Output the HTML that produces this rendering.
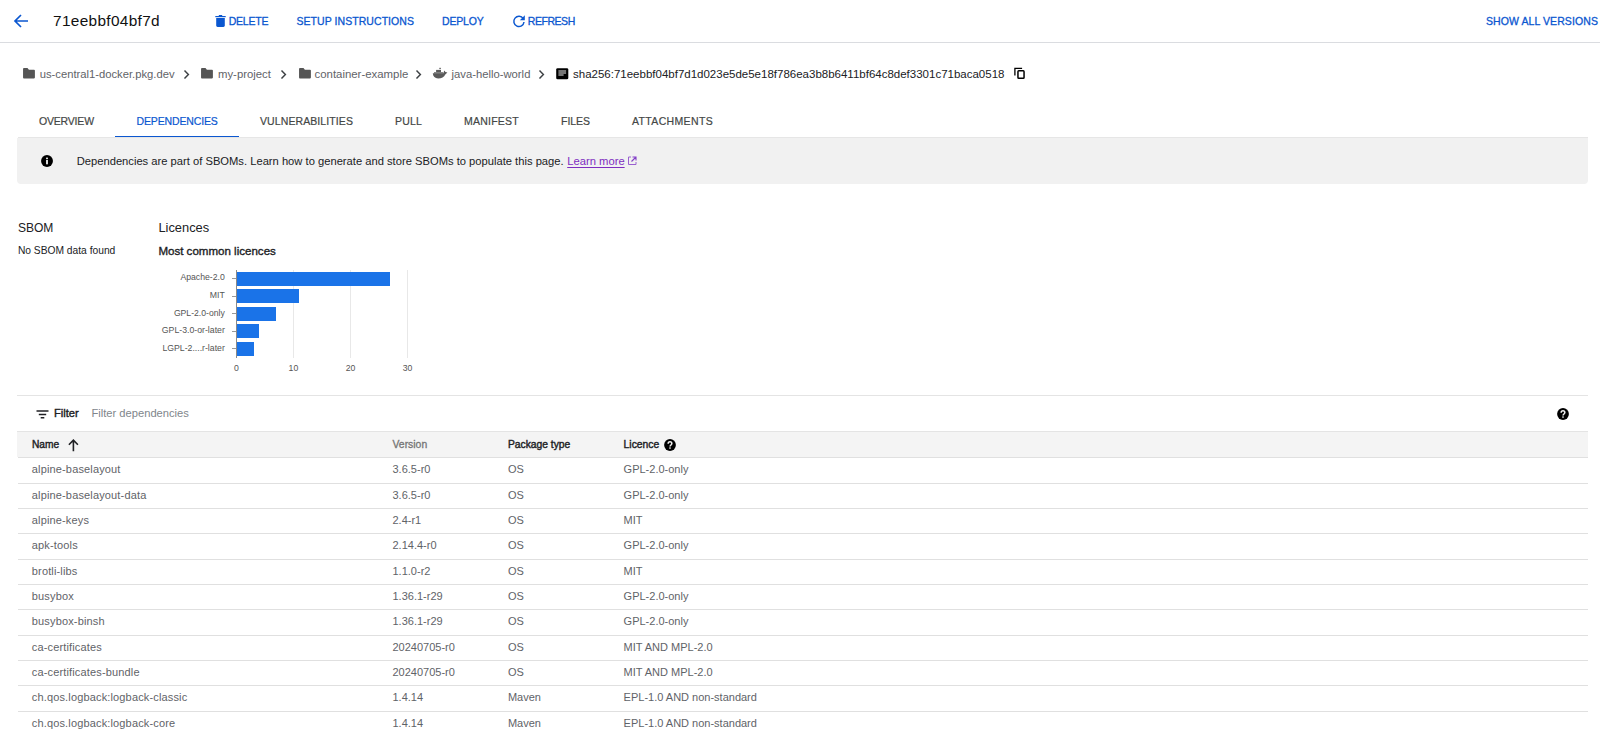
<!DOCTYPE html>
<html><head><meta charset="utf-8"><style>
html,body{margin:0;padding:0;background:#fff;width:1600px;height:736px;overflow:hidden;position:relative;font-family:"Liberation Sans", sans-serif;}
.t{position:absolute;white-space:nowrap;}
.r{position:absolute;}
</style></head><body>
<svg class="r" style="left:13px;top:13px" width="16" height="16" viewBox="0 0 16 16"><path d="M15 8H2.5M8 2L2 8l6 6" fill="none" stroke="#0b57d0" stroke-width="1.7"/></svg>
<div class="t" style="left:53.00px;top:12.76px;font-size:15.4px;line-height:15.4px;color:#111;font-weight:400;letter-spacing:0.325px;">71eebbf04bf7d</div>
<svg class="r" style="left:215px;top:15px" width="11" height="12" viewBox="0 0 11 12"><path d="M0.3 1.6h10.4" stroke="#0b57d0" stroke-width="1.2"/><path d="M3.8 0.7h3.4" stroke="#0b57d0" stroke-width="1.4"/><path d="M1.2 3h8.6v7.6c0 .8-.6 1.4-1.4 1.4H2.6c-.8 0-1.4-.6-1.4-1.4z" fill="#0b57d0"/></svg>
<div class="t" style="left:228.70px;top:16.21px;font-size:10.5px;line-height:10.5px;color:#0b57d0;font-weight:400;letter-spacing:-0.224px;-webkit-text-stroke:0.3px #0b57d0;">DELETE</div>
<div class="t" style="left:296.50px;top:16.21px;font-size:10.5px;line-height:10.5px;color:#0b57d0;font-weight:400;letter-spacing:0.056px;-webkit-text-stroke:0.3px #0b57d0;">SETUP INSTRUCTIONS</div>
<div class="t" style="left:442.00px;top:15.71px;font-size:10.5px;line-height:10.5px;color:#0b57d0;font-weight:400;letter-spacing:-0.183px;-webkit-text-stroke:0.3px #0b57d0;">DEPLOY</div>
<svg class="r" style="left:512px;top:14px" width="14" height="14" viewBox="0 0 14 14"><path d="M11.2 4.6A5.1 5.1 0 1 0 12 8" fill="none" stroke="#0b57d0" stroke-width="1.5"/><path d="M12.8 1.2v5H7.8z" fill="#0b57d0"/></svg>
<div class="t" style="left:527.80px;top:15.71px;font-size:10.5px;line-height:10.5px;color:#0b57d0;font-weight:400;letter-spacing:-0.453px;-webkit-text-stroke:0.3px #0b57d0;">REFRESH</div>
<div class="t" style="right:2.00px;top:15.71px;font-size:10.5px;line-height:10.5px;color:#0b57d0;font-weight:400;letter-spacing:0.09px;-webkit-text-stroke:0.3px #0b57d0;">SHOW ALL VERSIONS</div>
<div class="r" style="left:0px;top:42px;width:1600px;height:1px;background:#dadce0;"></div>
<svg class="r" style="left:23px;top:68.2px" width="12" height="10.5" viewBox="0 0 12 10.5"><path d="M0.9 0.1H4.5L5.9 1.7H11C11.5 1.7 11.9 2.1 11.9 2.6V9.5C11.9 10 11.5 10.4 11 10.4H0.9C0.4 10.4 0.05 10 0.05 9.5V1C0.05 0.5 0.4 0.1 0.9 0.1Z" fill="#555"/></svg>
<div class="t" style="left:39.70px;top:68.88px;font-size:11.244px;line-height:11.244px;color:#5f6368;font-weight:400;">us-central1-docker.pkg.dev</div>
<svg class="r" style="left:182.5px;top:69.8px" width="8" height="9" viewBox="0 0 8 9"><path d="M1.5 0.6l3.9 3.95-3.9 3.95" fill="none" stroke="#3c4043" stroke-width="1.45"/></svg>
<svg class="r" style="left:201px;top:68.2px" width="12" height="10.5" viewBox="0 0 12 10.5"><path d="M0.9 0.1H4.5L5.9 1.7H11C11.5 1.7 11.9 2.1 11.9 2.6V9.5C11.9 10 11.5 10.4 11 10.4H0.9C0.4 10.4 0.05 10 0.05 9.5V1C0.05 0.5 0.4 0.1 0.9 0.1Z" fill="#555"/></svg>
<div class="t" style="left:218.00px;top:68.79px;font-size:11.355px;line-height:11.355px;color:#5f6368;font-weight:400;">my-project</div>
<svg class="r" style="left:279.5px;top:69.8px" width="8" height="9" viewBox="0 0 8 9"><path d="M1.5 0.6l3.9 3.95-3.9 3.95" fill="none" stroke="#3c4043" stroke-width="1.45"/></svg>
<svg class="r" style="left:298.5px;top:68.2px" width="12" height="10.5" viewBox="0 0 12 10.5"><path d="M0.9 0.1H4.5L5.9 1.7H11C11.5 1.7 11.9 2.1 11.9 2.6V9.5C11.9 10 11.5 10.4 11 10.4H0.9C0.4 10.4 0.05 10 0.05 9.5V1C0.05 0.5 0.4 0.1 0.9 0.1Z" fill="#555"/></svg>
<div class="t" style="left:314.50px;top:68.73px;font-size:11.426px;line-height:11.426px;color:#5f6368;font-weight:400;">container-example</div>
<svg class="r" style="left:414.5px;top:69.8px" width="8" height="9" viewBox="0 0 8 9"><path d="M1.5 0.6l3.9 3.95-3.9 3.95" fill="none" stroke="#3c4043" stroke-width="1.45"/></svg>
<svg class="r" style="left:432px;top:67px" width="16" height="12" viewBox="0 0 16 12"><g fill="#5a5a5a"><rect x="7.2" y="0.8" width="1.8" height="1.3" fill="#777"/><rect x="4.1" y="2.9" width="4.9" height="2.3"/><rect x="2" y="5.2" width="9.2" height="1.3" fill="#6a6a6a"/><path d="M0.8 6.3H11.4L12.2 3.6L13.5 5L15.4 5.6L13.3 7.5C12.1 10 9.6 11.4 6.1 11.4C3 11.4 1 9.7 0.8 6.3Z"/></g></svg>
<div class="t" style="left:451.50px;top:68.85px;font-size:11.281px;line-height:11.281px;color:#5f6368;font-weight:400;">java-hello-world</div>
<svg class="r" style="left:537.5px;top:69.8px" width="8" height="9" viewBox="0 0 8 9"><path d="M1.5 0.6l3.9 3.95-3.9 3.95" fill="none" stroke="#3c4043" stroke-width="1.45"/></svg>
<svg class="r" style="left:556px;top:68px" width="12.5" height="11.5" viewBox="0 0 12.5 11.5"><rect x="0.2" y="0.2" width="12.1" height="11.1" rx="1.4" fill="#000"/><path d="M2.4 3h7.7M2.4 5h7.7M2.4 7h5.2" stroke="#e8e8e8" stroke-width="1.15"/></svg>
<div class="t" style="left:573.00px;top:68.65px;font-size:11.514px;line-height:11.514px;color:#202124;font-weight:400;">sha256:71eebbf04bf7d1d023e5de5e18f786ea3b8b6411bf64c8def3301c71baca0518</div>
<svg class="r" style="left:1013px;top:67px" width="14" height="14" viewBox="0 0 14 14"><path d="M1.9 8.6V1.4h7.2" fill="none" stroke="#000" stroke-width="1.3"/><rect x="4.95" y="3.85" width="6.1" height="7.4" rx="0.8" fill="none" stroke="#000" stroke-width="1.5"/></svg>
<div class="t" style="left:38.90px;top:115.91px;font-size:10.5px;line-height:10.5px;color:#444746;font-weight:400;letter-spacing:-0.175px;-webkit-text-stroke:0.2px #444746;">OVERVIEW</div>
<div class="t" style="left:136.60px;top:115.91px;font-size:10.5px;line-height:10.5px;color:#0b57d0;font-weight:400;letter-spacing:-0.154px;-webkit-text-stroke:0.2px #0b57d0;">DEPENDENCIES</div>
<div class="t" style="left:260.00px;top:115.91px;font-size:10.5px;line-height:10.5px;color:#444746;font-weight:400;letter-spacing:0.092px;-webkit-text-stroke:0.2px #444746;">VULNERABILITIES</div>
<div class="t" style="left:395.00px;top:115.91px;font-size:10.5px;line-height:10.5px;color:#444746;font-weight:400;letter-spacing:0.183px;-webkit-text-stroke:0.2px #444746;">PULL</div>
<div class="t" style="left:464.00px;top:115.91px;font-size:10.5px;line-height:10.5px;color:#444746;font-weight:400;letter-spacing:0.239px;-webkit-text-stroke:0.2px #444746;">MANIFEST</div>
<div class="t" style="left:561.00px;top:115.91px;font-size:10.5px;line-height:10.5px;color:#444746;font-weight:400;letter-spacing:-0.036px;-webkit-text-stroke:0.2px #444746;">FILES</div>
<div class="t" style="left:632.00px;top:115.91px;font-size:10.5px;line-height:10.5px;color:#444746;font-weight:400;letter-spacing:0.346px;-webkit-text-stroke:0.2px #444746;">ATTACHMENTS</div>
<div class="r" style="left:115px;top:135.5px;width:124px;height:2px;background:#0b57d0;"></div>
<div class="r" style="left:17.5px;top:137px;width:1570px;height:1px;background:#e6e6e6;"></div>
<div class="r" style="left:17px;top:138px;width:1570.5px;height:46px;background:#f1f1f1;border-radius:0 0 4px 4px;"></div>
<svg class="r" style="left:41.2px;top:154.9px" width="12" height="12" viewBox="0 0 12 12"><circle cx="6" cy="6" r="5.95" fill="#000"/><rect x="5.15" y="5" width="1.7" height="4.3" fill="#fff"/><rect x="5.15" y="2.6" width="1.7" height="1.6" fill="#fff"/></svg>
<div class="t" style="left:76.70px;top:155.82px;font-size:11.2px;line-height:11.2px;color:#202124;font-weight:400;">Dependencies are part of SBOMs. Learn how to generate and store SBOMs to populate this page.</div>
<div class="t" style="left:567.20px;top:155.78px;font-size:11.244px;line-height:11.244px;color:#7e2dc0;font-weight:400;text-decoration:underline;text-underline-offset:2px;">Learn more</div>
<svg class="r" style="left:627px;top:156px" width="10" height="10" viewBox="0 0 10 10"><path d="M4 1H1.5v7.5H9V6" fill="none" stroke="#9a60d0" stroke-width="1"/><path d="M5.5 1H9v3.5M9 1L4.5 5.5" fill="none" stroke="#8440c8" stroke-width="1.1"/></svg>
<div class="t" style="left:17.90px;top:222.20px;font-size:12.055px;line-height:12.055px;color:#202124;font-weight:400;">SBOM</div>
<div class="t" style="left:17.90px;top:245.51px;font-size:10.268px;line-height:10.268px;color:#202124;font-weight:400;">No SBOM data found</div>
<div class="t" style="left:158.40px;top:221.50px;font-size:12.871px;line-height:12.871px;color:#202124;font-weight:400;">Licences</div>
<div class="t" style="left:158.40px;top:245.91px;font-size:11.563px;line-height:11.563px;color:#202124;font-weight:400;-webkit-text-stroke:0.35px #202124;">Most common licences</div>
<div class="r" style="left:292.95px;top:270px;width:1px;height:88px;background:#e8e8e8;"></div>
<div class="r" style="left:350.0px;top:270px;width:1px;height:88px;background:#e8e8e8;"></div>
<div class="r" style="left:407.05px;top:270px;width:1px;height:88px;background:#e8e8e8;"></div>
<div class="r" style="left:236.4px;top:271.6px;width:154.03px;height:14px;background:#1a73e8;"></div>
<div class="r" style="left:232.3px;top:278.2px;width:4px;height:1px;background:#999;"></div>
<div class="t" style="right:1375.20px;top:273.44px;font-size:8.7px;line-height:8.7px;color:#555;font-weight:400;">Apache-2.0</div>
<div class="r" style="left:236.4px;top:289.15px;width:62.76px;height:14px;background:#1a73e8;"></div>
<div class="r" style="left:232.3px;top:295.75px;width:4px;height:1px;background:#999;"></div>
<div class="t" style="right:1375.20px;top:290.98px;font-size:8.712px;line-height:8.712px;color:#555;font-weight:400;">MIT</div>
<div class="r" style="left:236.4px;top:306.7px;width:39.94px;height:14px;background:#1a73e8;"></div>
<div class="r" style="left:232.3px;top:313.3px;width:4px;height:1px;background:#999;"></div>
<div class="t" style="right:1375.20px;top:308.57px;font-size:8.656px;line-height:8.656px;color:#555;font-weight:400;">GPL-2.0-only</div>
<div class="r" style="left:236.4px;top:324.25px;width:22.82px;height:14px;background:#1a73e8;"></div>
<div class="r" style="left:232.3px;top:330.85px;width:4px;height:1px;background:#999;"></div>
<div class="t" style="right:1375.20px;top:326.07px;font-size:8.72px;line-height:8.72px;color:#555;font-weight:400;">GPL-3.0-or-later</div>
<div class="r" style="left:236.4px;top:341.8px;width:17.12px;height:14px;background:#1a73e8;"></div>
<div class="r" style="left:232.3px;top:348.4px;width:4px;height:1px;background:#999;"></div>
<div class="t" style="right:1375.20px;top:343.62px;font-size:8.718px;line-height:8.718px;color:#555;font-weight:400;">LGPL-2....r-later</div>
<div class="r" style="left:236.1px;top:270px;width:1px;height:88px;background:#8a8a8a;"></div>
<div class="t" style="left:186.40px;width:100px;text-align:center;top:363.94px;font-size:8.7px;line-height:8.7px;color:#555;font-weight:400;">0</div>
<div class="t" style="left:243.45px;width:100px;text-align:center;top:363.94px;font-size:8.7px;line-height:8.7px;color:#555;font-weight:400;">10</div>
<div class="t" style="left:300.50px;width:100px;text-align:center;top:363.94px;font-size:8.7px;line-height:8.7px;color:#555;font-weight:400;">20</div>
<div class="t" style="left:357.55px;width:100px;text-align:center;top:363.94px;font-size:8.7px;line-height:8.7px;color:#555;font-weight:400;">30</div>
<div class="r" style="left:17px;top:395.2px;width:1570.5px;height:1px;background:#e4e4e4;"></div>
<svg class="r" style="left:35.5px;top:409.5px" width="13" height="9" viewBox="0 0 13 9"><path d="M0.5 1h12M2.8 4.4h7.4M4.7 7.7h3.6" stroke="#202124" stroke-width="1.5"/></svg>
<div class="t" style="left:54.00px;top:407.85px;font-size:11.16px;line-height:11.16px;color:#202124;font-weight:400;-webkit-text-stroke:0.4px #202124;">Filter</div>
<div class="t" style="left:91.40px;top:407.83px;font-size:11.183px;line-height:11.183px;color:#80868b;font-weight:400;">Filter dependencies</div>
<svg class="r" style="left:1557.3px;top:407.8px" width="12" height="12" viewBox="0 0 12 12"><circle cx="6" cy="6" r="5.9" fill="#000"/><path d="M4.15 4.7c0-1.15.85-1.85 1.85-1.85s1.85.7 1.85 1.75c0 1.35-1.8 1.45-1.8 2.85" fill="none" stroke="#f0f0f0" stroke-width="1.5"/><rect x="5.25" y="8.35" width="1.5" height="1.4" fill="#f0f0f0"/></svg>
<div class="r" style="left:17px;top:431.2px;width:1570.5px;height:26.2px;background:#f4f4f4;border-top:1px solid #e4e4e4;box-sizing:border-box;"></div>
<div class="t" style="left:32.00px;top:439.77px;font-size:10.197px;line-height:10.197px;color:#202124;font-weight:400;-webkit-text-stroke:0.4px #202124;">Name</div>
<svg class="r" style="left:68px;top:438.5px" width="11" height="13" viewBox="0 0 11 13"><path d="M5.4 12.2V1.4M0.9 5.7l4.5-4.5 4.5 4.5" fill="none" stroke="#202124" stroke-width="1.6"/></svg>
<div class="t" style="left:392.50px;top:439.59px;font-size:10.403px;line-height:10.403px;color:#757575;font-weight:400;-webkit-text-stroke:0.3px #757575;">Version</div>
<div class="t" style="left:507.90px;top:439.67px;font-size:10.314px;line-height:10.314px;color:#202124;font-weight:400;-webkit-text-stroke:0.4px #202124;">Package type</div>
<div class="t" style="left:623.60px;top:439.63px;font-size:10.357px;line-height:10.357px;color:#202124;font-weight:400;-webkit-text-stroke:0.4px #202124;">Licence</div>
<svg class="r" style="left:663.8px;top:438.8px" width="12" height="12" viewBox="0 0 12 12"><circle cx="6" cy="6" r="5.9" fill="#000"/><path d="M4.15 4.7c0-1.15.85-1.85 1.85-1.85s1.85.7 1.85 1.75c0 1.35-1.8 1.45-1.8 2.85" fill="none" stroke="#f0f0f0" stroke-width="1.5"/><rect x="5.25" y="8.35" width="1.5" height="1.4" fill="#f0f0f0"/></svg>
<div class="r" style="left:17.5px;top:457.2px;width:1570px;height:1px;background:#e0e0e0;"></div>
<div class="t" style="left:31.80px;top:464.49px;font-size:11.0px;line-height:11.0px;color:#5f6368;font-weight:400;letter-spacing:0.15px;">alpine-baselayout</div>
<div class="t" style="left:392.50px;top:464.49px;font-size:11.0px;line-height:11.0px;color:#5f6368;font-weight:400;">3.6.5-r0</div>
<div class="t" style="left:507.90px;top:464.49px;font-size:11.0px;line-height:11.0px;color:#5f6368;font-weight:400;">OS</div>
<div class="t" style="left:623.60px;top:464.49px;font-size:11.0px;line-height:11.0px;color:#5f6368;font-weight:400;">GPL-2.0-only</div>
<div class="r" style="left:17.5px;top:482.53px;width:1570px;height:1px;background:#e0e0e0;"></div>
<div class="t" style="left:31.80px;top:489.82px;font-size:11.0px;line-height:11.0px;color:#5f6368;font-weight:400;letter-spacing:0.15px;">alpine-baselayout-data</div>
<div class="t" style="left:392.50px;top:489.82px;font-size:11.0px;line-height:11.0px;color:#5f6368;font-weight:400;">3.6.5-r0</div>
<div class="t" style="left:507.90px;top:489.82px;font-size:11.0px;line-height:11.0px;color:#5f6368;font-weight:400;">OS</div>
<div class="t" style="left:623.60px;top:489.82px;font-size:11.0px;line-height:11.0px;color:#5f6368;font-weight:400;">GPL-2.0-only</div>
<div class="r" style="left:17.5px;top:507.86px;width:1570px;height:1px;background:#e0e0e0;"></div>
<div class="t" style="left:31.80px;top:515.15px;font-size:11.0px;line-height:11.0px;color:#5f6368;font-weight:400;letter-spacing:0.15px;">alpine-keys</div>
<div class="t" style="left:392.50px;top:515.15px;font-size:11.0px;line-height:11.0px;color:#5f6368;font-weight:400;">2.4-r1</div>
<div class="t" style="left:507.90px;top:515.15px;font-size:11.0px;line-height:11.0px;color:#5f6368;font-weight:400;">OS</div>
<div class="t" style="left:623.60px;top:515.15px;font-size:11.0px;line-height:11.0px;color:#5f6368;font-weight:400;">MIT</div>
<div class="r" style="left:17.5px;top:533.19px;width:1570px;height:1px;background:#e0e0e0;"></div>
<div class="t" style="left:31.80px;top:540.48px;font-size:11.0px;line-height:11.0px;color:#5f6368;font-weight:400;letter-spacing:0.15px;">apk-tools</div>
<div class="t" style="left:392.50px;top:540.48px;font-size:11.0px;line-height:11.0px;color:#5f6368;font-weight:400;">2.14.4-r0</div>
<div class="t" style="left:507.90px;top:540.48px;font-size:11.0px;line-height:11.0px;color:#5f6368;font-weight:400;">OS</div>
<div class="t" style="left:623.60px;top:540.48px;font-size:11.0px;line-height:11.0px;color:#5f6368;font-weight:400;">GPL-2.0-only</div>
<div class="r" style="left:17.5px;top:558.52px;width:1570px;height:1px;background:#e0e0e0;"></div>
<div class="t" style="left:31.80px;top:565.81px;font-size:11.0px;line-height:11.0px;color:#5f6368;font-weight:400;letter-spacing:0.15px;">brotli-libs</div>
<div class="t" style="left:392.50px;top:565.81px;font-size:11.0px;line-height:11.0px;color:#5f6368;font-weight:400;">1.1.0-r2</div>
<div class="t" style="left:507.90px;top:565.81px;font-size:11.0px;line-height:11.0px;color:#5f6368;font-weight:400;">OS</div>
<div class="t" style="left:623.60px;top:565.81px;font-size:11.0px;line-height:11.0px;color:#5f6368;font-weight:400;">MIT</div>
<div class="r" style="left:17.5px;top:583.85px;width:1570px;height:1px;background:#e0e0e0;"></div>
<div class="t" style="left:31.80px;top:591.14px;font-size:11.0px;line-height:11.0px;color:#5f6368;font-weight:400;letter-spacing:0.15px;">busybox</div>
<div class="t" style="left:392.50px;top:591.14px;font-size:11.0px;line-height:11.0px;color:#5f6368;font-weight:400;">1.36.1-r29</div>
<div class="t" style="left:507.90px;top:591.14px;font-size:11.0px;line-height:11.0px;color:#5f6368;font-weight:400;">OS</div>
<div class="t" style="left:623.60px;top:591.14px;font-size:11.0px;line-height:11.0px;color:#5f6368;font-weight:400;">GPL-2.0-only</div>
<div class="r" style="left:17.5px;top:609.18px;width:1570px;height:1px;background:#e0e0e0;"></div>
<div class="t" style="left:31.80px;top:616.47px;font-size:11.0px;line-height:11.0px;color:#5f6368;font-weight:400;letter-spacing:0.15px;">busybox-binsh</div>
<div class="t" style="left:392.50px;top:616.47px;font-size:11.0px;line-height:11.0px;color:#5f6368;font-weight:400;">1.36.1-r29</div>
<div class="t" style="left:507.90px;top:616.47px;font-size:11.0px;line-height:11.0px;color:#5f6368;font-weight:400;">OS</div>
<div class="t" style="left:623.60px;top:616.47px;font-size:11.0px;line-height:11.0px;color:#5f6368;font-weight:400;">GPL-2.0-only</div>
<div class="r" style="left:17.5px;top:634.51px;width:1570px;height:1px;background:#e0e0e0;"></div>
<div class="t" style="left:31.80px;top:641.80px;font-size:11.0px;line-height:11.0px;color:#5f6368;font-weight:400;letter-spacing:0.15px;">ca-certificates</div>
<div class="t" style="left:392.50px;top:641.80px;font-size:11.0px;line-height:11.0px;color:#5f6368;font-weight:400;">20240705-r0</div>
<div class="t" style="left:507.90px;top:641.80px;font-size:11.0px;line-height:11.0px;color:#5f6368;font-weight:400;">OS</div>
<div class="t" style="left:623.60px;top:641.80px;font-size:11.0px;line-height:11.0px;color:#5f6368;font-weight:400;">MIT AND MPL-2.0</div>
<div class="r" style="left:17.5px;top:659.84px;width:1570px;height:1px;background:#e0e0e0;"></div>
<div class="t" style="left:31.80px;top:667.13px;font-size:11.0px;line-height:11.0px;color:#5f6368;font-weight:400;letter-spacing:0.15px;">ca-certificates-bundle</div>
<div class="t" style="left:392.50px;top:667.13px;font-size:11.0px;line-height:11.0px;color:#5f6368;font-weight:400;">20240705-r0</div>
<div class="t" style="left:507.90px;top:667.13px;font-size:11.0px;line-height:11.0px;color:#5f6368;font-weight:400;">OS</div>
<div class="t" style="left:623.60px;top:667.13px;font-size:11.0px;line-height:11.0px;color:#5f6368;font-weight:400;">MIT AND MPL-2.0</div>
<div class="r" style="left:17.5px;top:685.17px;width:1570px;height:1px;background:#e0e0e0;"></div>
<div class="t" style="left:31.80px;top:692.46px;font-size:11.0px;line-height:11.0px;color:#5f6368;font-weight:400;letter-spacing:0.15px;">ch.qos.logback:logback-classic</div>
<div class="t" style="left:392.50px;top:692.46px;font-size:11.0px;line-height:11.0px;color:#5f6368;font-weight:400;">1.4.14</div>
<div class="t" style="left:507.90px;top:692.46px;font-size:11.0px;line-height:11.0px;color:#5f6368;font-weight:400;">Maven</div>
<div class="t" style="left:623.60px;top:692.46px;font-size:11.0px;line-height:11.0px;color:#5f6368;font-weight:400;">EPL-1.0 AND non-standard</div>
<div class="r" style="left:17.5px;top:710.5px;width:1570px;height:1px;background:#e0e0e0;"></div>
<div class="t" style="left:31.80px;top:717.79px;font-size:11.0px;line-height:11.0px;color:#5f6368;font-weight:400;letter-spacing:0.15px;">ch.qos.logback:logback-core</div>
<div class="t" style="left:392.50px;top:717.79px;font-size:11.0px;line-height:11.0px;color:#5f6368;font-weight:400;">1.4.14</div>
<div class="t" style="left:507.90px;top:717.79px;font-size:11.0px;line-height:11.0px;color:#5f6368;font-weight:400;">Maven</div>
<div class="t" style="left:623.60px;top:717.79px;font-size:11.0px;line-height:11.0px;color:#5f6368;font-weight:400;">EPL-1.0 AND non-standard</div>
<div class="r" style="left:17.5px;top:735.83px;width:1570px;height:1px;background:#e0e0e0;"></div>
</body></html>
